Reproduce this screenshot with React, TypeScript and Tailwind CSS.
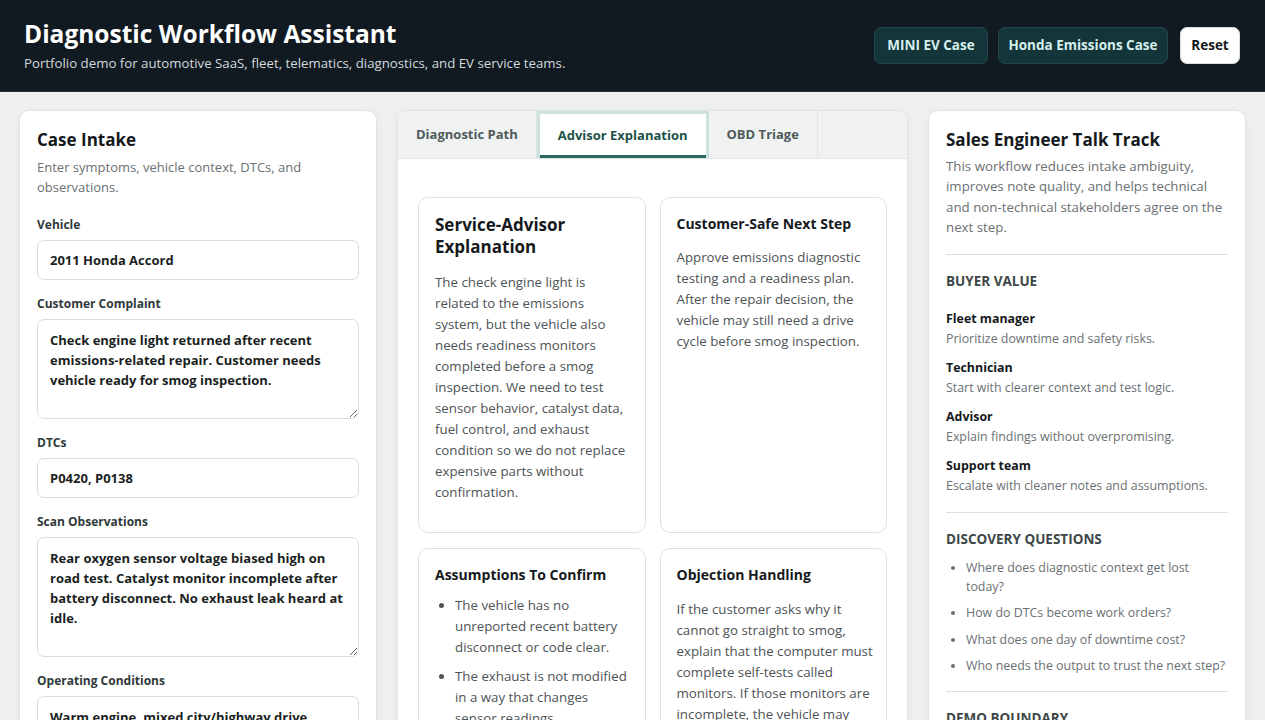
import { useState } from "react";

const font = { fontFamily: '"Open Sans", "Noto Sans", Arial, sans-serif' };

const tabs = ["Diagnostic Path", "Advisor Explanation", "OBD Triage"];

const buyerValue = [
  { role: "Fleet manager", text: "Prioritize downtime and safety risks." },
  { role: "Technician", text: "Start with clearer context and test logic." },
  { role: "Advisor", text: "Explain findings without overpromising." },
  { role: "Support team", text: "Escalate with cleaner notes and assumptions." },
];

const questions = [
  "Where does diagnostic context get lost today?",
  "How do DTCs become work orders?",
  "What does one day of downtime cost?",
  "Who needs the output to trust the next step?",
];

function Field({ label, children }: { label: string; children: React.ReactNode }) {
  return (
    <div className="flex flex-col">
      <label className="text-[12px] leading-[18px] font-bold text-[#2e3a39] mb-[6px]">{label}</label>
      {children}
    </div>
  );
}

const inputCls =
  "w-full h-[40px] rounded-[7px] border border-[#d9dddf] bg-white px-3 text-[13px] font-bold text-[#1b1f22] outline-none";
const areaCls =
  "w-full rounded-[7px] border border-[#d9dddf] bg-white px-3 py-[10px] text-[13px] leading-[20px] font-bold text-[#1b1f22] outline-none resize-y";

const cardCls = "rounded-[10px] border border-[#dde1e3] p-4";
const bodyCls = "text-[13.3px] leading-[21px] text-[#4d5356]";
const sideHead = "text-[13.5px] leading-[20px] font-bold uppercase text-[#3d4747]";

export default function App() {
  const [tab, setTab] = useState(1);

  return (
    <div style={font} className="min-h-screen bg-[#eef0f0] text-[#15191c]">
      {/* Top bar */}
      <header className="h-[92px] bg-[#121a21] border-b border-[#2a3238] flex items-center justify-between pl-6 pr-[25px]">
        <div>
          <h1 className="text-[24.5px] leading-[32px] font-bold text-white">Diagnostic Workflow Assistant</h1>
          <p className="mt-[3px] text-[13.25px] leading-[20px] text-[#d3d9dc]">
            Portfolio demo for automotive SaaS, fleet, telematics, diagnostics, and EV service teams.
          </p>
        </div>
        <div className="flex items-center gap-[10px]">
          <button className="w-[114px] h-[37px] rounded-[7px] border border-[#244649] bg-[#14363a] text-[13.5px] font-bold text-[#d5efec]">
            MINI EV Case
          </button>
          <button className="w-[170px] h-[37px] rounded-[7px] border border-[#244649] bg-[#14363a] text-[13.5px] font-bold text-[#d5efec]">
            Honda Emissions Case
          </button>
          <button className="ml-[2px] w-[60px] h-[37px] rounded-[7px] border border-[#d9dddf] bg-white text-[13.5px] font-bold text-[#15191c]">
            Reset
          </button>
        </div>
      </header>

      <main className="grid grid-cols-[358px_1fr_318px] gap-[20px] px-[19px] pt-[18px] pb-8 items-start">
        {/* Case intake */}
        <section className="bg-white rounded-[10px] border border-[#e0e4e4] shadow-[0_2px_10px_rgba(0,0,0,0.04)] p-[17px]">
          <h2 className="text-[17px] leading-[24px] font-bold">Case Intake</h2>
          <p className="mt-[5px] text-[13px] leading-[20px] text-[#6a7073]">
            Enter symptoms, vehicle context, DTCs, and observations.
          </p>
          <div className="mt-[19px] flex flex-col gap-[15px]">
            <Field label="Vehicle">
              <input className={inputCls} defaultValue="2011 Honda Accord" />
            </Field>
            <Field label="Customer Complaint">
              <textarea
                className={`${areaCls} h-[100px]`}
                defaultValue="Check engine light returned after recent emissions-related repair. Customer needs vehicle ready for smog inspection."
              />
            </Field>
            <Field label="DTCs">
              <input className={inputCls} defaultValue="P0420, P0138" />
            </Field>
            <Field label="Scan Observations">
              <textarea
                className={`${areaCls} h-[120px]`}
                defaultValue="Rear oxygen sensor voltage biased high on road test. Catalyst monitor incomplete after battery disconnect. No exhaust leak heard at idle."
              />
            </Field>
            <Field label="Operating Conditions">
              <textarea
                className={`${areaCls} h-[80px]`}
                defaultValue="Warm engine, mixed city/highway drive cycle, no misfire counts recorded."
              />
            </Field>
          </div>
        </section>

        {/* Output tabs */}
        <section className="bg-white rounded-[10px] border border-[#e0e4e4] shadow-[0_2px_10px_rgba(0,0,0,0.04)] overflow-hidden">
          <div className="flex h-[48px] bg-[#f0f2f2] border-b border-[#e0e4e4]">
            {tabs.map((t, i) => (
              <button
                key={t}
                onClick={() => setTab(i)}
                className={
                  i === tab
                    ? "px-[18px] text-[13px] font-bold text-[#1d5049] bg-white border-x-[3px] border-t-[3px] border-[#cde1de] shadow-[inset_0_-3px_0_#2b6a63]"
                    : "px-[18px] text-[13px] font-bold text-[#4f5b5b] border-r border-[#e0e4e4]"
                }
              >
                {t}
              </button>
            ))}
          </div>
          <div className="px-[20px] pt-[38px] pb-[20px]">
            <div className="grid grid-cols-2 gap-x-[14px] gap-y-[15px]">
              <div className={cardCls}>
                <h3 className="text-[17px] leading-[22px] font-bold">Service-Advisor Explanation</h3>
                <p className={`mt-[14px] mb-[13px] ${bodyCls}`}>
                  The check engine light is related to the emissions system, but the vehicle also needs readiness
                  monitors completed before a smog inspection. We need to test sensor behavior, catalyst data, fuel
                  control, and exhaust condition so we do not replace expensive parts without confirmation.
                </p>
              </div>
              <div className={cardCls}>
                <h4 className="text-[14px] leading-[20px] font-bold">Customer-Safe Next Step</h4>
                <p className={`mt-[13px] ${bodyCls}`}>
                  Approve emissions diagnostic testing and a readiness plan. After the repair decision, the vehicle
                  may still need a drive cycle before smog inspection.
                </p>
              </div>
              <div className={cardCls}>
                <h4 className="text-[14px] leading-[20px] font-bold">Assumptions To Confirm</h4>
                <ul className={`mt-[10px] pl-[20px] list-disc marker:text-[#4d5356] flex flex-col gap-[8px] ${bodyCls}`}>
                  <li>The vehicle has no unreported recent battery disconnect or code clear.</li>
                  <li>The exhaust is not modified in a way that changes sensor readings.</li>
                  <li>Prior repair parts match the vehicle emissions label.</li>
                </ul>
              </div>
              <div className={cardCls}>
                <h4 className="text-[14px] leading-[20px] font-bold">Objection Handling</h4>
                <p className={`mt-[14px] -mr-[2.7px] ${bodyCls}`}>
                  If the customer asks why it cannot go straight to smog, explain that the computer must complete
                  self-tests called monitors. If those monitors are incomplete, the vehicle may not pass even if the
                  repair is correct.
                </p>
              </div>
            </div>
          </div>
        </section>

        {/* Talk track */}
        <section className="bg-white rounded-[10px] border border-[#e0e4e4] shadow-[0_2px_10px_rgba(0,0,0,0.04)] p-[17px]">
          <h2 className="text-[17px] leading-[24px] font-bold">Sales Engineer Talk Track</h2>
          <p className="mt-[4px] text-[13.3px] leading-[20.4px] text-[#6a7073]">
            This workflow reduces intake ambiguity, improves note quality, and helps technical and non-technical
            stakeholders agree on the next step.
          </p>
          <hr className="my-[16px] border-[#dcdfe1]" />
          <h3 className={sideHead}>Buyer Value</h3>
          <div className="mt-[18px] flex flex-col gap-[9px]">
            {buyerValue.map((b) => (
              <div key={b.role}>
                <div className="text-[12.4px] leading-[20px] font-bold text-[#15191c]">{b.role}</div>
                <div className="text-[12.4px] leading-[20px] text-[#6a7073]">{b.text}</div>
              </div>
            ))}
          </div>
          <hr className="my-[16px] border-[#dcdfe1]" />
          <h3 className={sideHead}>Discovery Questions</h3>
          <ul className="mt-[9px] pl-[20px] list-disc marker:text-[#6a7073] flex flex-col gap-[7.5px] text-[12.4px] leading-[19px] text-[#6a7073]">
            {questions.map((q) => (
              <li key={q}>{q}</li>
            ))}
          </ul>
          <hr className="my-[16px] border-[#dcdfe1]" />
          <h3 className={sideHead}>Demo Boundary</h3>
          <p className="mt-[8px] text-[12.4px] leading-[19px] text-[#6a7073]">
            Outputs are illustrative and do not replace OEM service information or a qualified technician.
          </p>
        </section>
      </main>
    </div>
  );
}
